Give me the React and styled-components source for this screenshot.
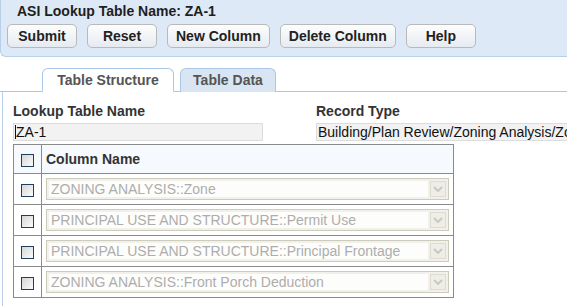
import React from 'react';
import styled, { createGlobalStyle } from 'styled-components';

// 페이지 기본 스타일
const GlobalStyle = createGlobalStyle`
    html, body {
        margin: 0;
        padding: 0;
        background: #fff;
        overflow: hidden;
    }
    body {
        font-family: "Liberation Sans", Arial, sans-serif;
        font-size: 14px;
        color: #222;
    }
`;

const buttons = ['Submit', 'Reset', 'New Column', 'Delete Column', 'Help'];

const columns = [
    'ZONING ANALYSIS::Zone',
    'PRINCIPAL USE AND STRUCTURE::Permit Use',
    'PRINCIPAL USE AND STRUCTURE::Principal Frontage',
    'ZONING ANALYSIS::Front Porch Deduction',
];

const Chevron = () => (
    <svg width="10" height="6" viewBox="0 0 10 6">
        <path d="M1 1 L5 5 L9 1" fill="none" stroke="#c9c9c2" strokeWidth="2" />
    </svg>
);

const App = () => {
    return (
        <Page>
            <GlobalStyle />
            <Header>
                <Title>ASI Lookup Table Name: ZA-1</Title>
                <ButtonRow>
                    {buttons.map((b) => (
                        <Button key={b}>{b}</Button>
                    ))}
                </ButtonRow>
            </Header>

            <TabBar>
                <Tab active>Table Structure</Tab>
                <Tab>Table Data</Tab>
            </TabBar>

            <Content>
                <Fields>
                    <Field>
                        <Label>Lookup Table Name</Label>
                        <TextBox width={250}>
                            <Caret />ZA-1
                        </TextBox>
                    </Field>
                    <Field>
                        <Label>Record Type</Label>
                        <TextBox width={262}>Building/Plan Review/Zoning Analysis/Zoning</TextBox>
                    </Field>
                </Fields>

                <Table>
                    <thead>
                        <tr>
                            <CheckCell header>
                                <Checkbox />
                            </CheckCell>
                            <HeadCell>Column Name</HeadCell>
                        </tr>
                    </thead>
                    <tbody>
                        {columns.map((c) => (
                            <tr key={c}>
                                <CheckCell>
                                    <Checkbox />
                                </CheckCell>
                                <NameCell>
                                    <Select>
                                        <SelectText>{c}</SelectText>
                                        <SelectButton>
                                            <Chevron />
                                        </SelectButton>
                                    </Select>
                                </NameCell>
                            </tr>
                        ))}
                    </tbody>
                </Table>
            </Content>
        </Page>
    );
};

// styled-components
const Page = styled.div`
    width: 567px;
    height: 306px;
    overflow: hidden;
`;

const Header = styled.div`
    height: 57px;
    box-sizing: border-box;
    background: #dde9f6;
    border-left: 1px solid #b9cfe7;
    border-bottom: 1px solid #b9cfe7;
    border-bottom-left-radius: 6px;
    padding-left: 6px;
`;

const Title = styled.div`
    height: 24px;
    line-height: 22px;
    padding-left: 10px;
    font-weight: bold;
    font-size: 14px;
    color: #1e1e1e;
`;

const ButtonRow = styled.div`
    display: flex;
    gap: 10px;
`;

const Button = styled.button`
    height: 24px;
    min-width: 70px;
    padding: 0 8px;
    border: 1px solid #b9b9b9;
    border-radius: 5px;
    background: linear-gradient(#fdfdfd, #e6ebf1);
    font-family: "Liberation Sans", Arial, sans-serif;
    font-weight: bold;
    font-size: 14px;
    color: #222;
`;

const TabBar = styled.div`
    display: flex;
    gap: 6px;
    padding: 11px 0 0 42px;
    height: 35px;
    box-sizing: border-box;
    border-bottom: 1px solid #a9c7e7;
`;

const Tab = styled.div`
    height: 24px;
    box-sizing: border-box;
    line-height: 22px;
    font-weight: bold;
    font-size: 14px;
    color: #555;
    border: 1px solid #a9c7e7;
    border-bottom: ${(p) => (p.active ? '1px solid #fff' : 'none')};
    border-radius: 6px 6px 0 0;
    background: ${(p) => (p.active ? '#fff' : '#d9e5f2')};
    margin-bottom: -1px;
    width: ${(p) => (p.active ? '132px' : '96px')};
    text-align: center;
`;

const Content = styled.div`
    margin-left: 2px;
    border-left: 1px solid #b9cfe7;
    padding: 10px 0 0 10px;
    height: 220px;
`;

const Fields = styled.div`
    display: grid;
    grid-template-columns: 303px 1fr;
`;

const Field = styled.div`
    display: flex;
    flex-direction: column;
`;

const Label = styled.div`
    font-weight: bold;
    font-size: 14px;
    line-height: 18px;
    color: #333;
    margin-bottom: 3px;
`;

const TextBox = styled.div`
    width: ${(p) => p.width}px;
    height: 18px;
    box-sizing: border-box;
    border: 1px solid #dcdcdc;
    background: #f2f2f2;
    font-size: 14px;
    line-height: 16px;
    padding-left: 1px;
    color: #111;
    white-space: nowrap;
    overflow: hidden;
    display: flex;
    align-items: center;
`;

const Caret = styled.span`
    width: 1px;
    height: 14px;
    background: #111;
`;

const Table = styled.table`
    margin-top: 3px;
    width: 441px;
    border-collapse: collapse;
    border: 1px solid #8a8a8a;
`;

const CheckCell = styled.td`
    width: 27px;
    height: ${(p) => (p.header ? '28px' : '30px')};
    padding: 0;
    text-align: center;
    vertical-align: middle;
    border: 1px solid #8a8a8a;
    background: ${(p) => (p.header ? '#f6f9fd' : '#fff')};
`;

const HeadCell = styled.th`
    text-align: left;
    padding: 0 4px;
    font-weight: bold;
    font-size: 14px;
    color: #333;
    background: #f6f9fd;
    border: 1px solid #8a8a8a;
`;

const NameCell = styled.td`
    padding: 0 4px;
    border: 1px solid #8a8a8a;
    vertical-align: middle;
`;

const Checkbox = styled.span`
    display: inline-block;
    vertical-align: middle;
    width: 13px;
    height: 13px;
    box-sizing: border-box;
    border: 1px solid #1f3f62;
    background: linear-gradient(135deg, #d6d6d6, #fbfbfb);
`;

const Select = styled.div`
    display: flex;
    height: 22px;
    box-sizing: border-box;
    border: 1px solid #cdcbbc;
    background: #f1f0ea;
    padding: 2px;
    gap: 2px;
`;

const SelectText = styled.div`
    flex: 1;
    background: #fdfdfb;
    font-size: 14px;
    line-height: 16px;
    padding-left: 2px;
    color: #adadad;
    white-space: nowrap;
    overflow: hidden;
`;

const SelectButton = styled.div`
    width: 16px;
    box-sizing: border-box;
    border: 1px solid #dedccf;
    background: #eeede6;
    display: flex;
    align-items: center;
    justify-content: center;
`;

export default App;
